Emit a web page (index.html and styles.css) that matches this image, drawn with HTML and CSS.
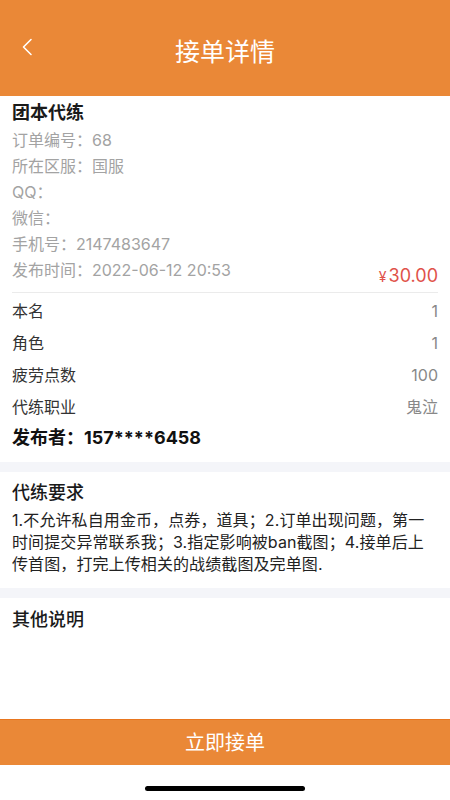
FILE: index.html
```html
<!DOCTYPE html>
<html lang="zh-CN">
<head>
<meta charset="utf-8">
<title>接单详情</title>
<link rel="stylesheet" href="styles.css">
</head>
<body>
<div class="page">
  <header class="topbar">
    <span class="back">
      <svg width="12" height="18" viewBox="0 0 12 18"><path d="M10 1.5 L2.5 9 L10 16.5" fill="none" stroke="#fff" stroke-width="1.6" stroke-linecap="round" stroke-linejoin="round"/></svg>
    </span>
    <h1 class="title">接单详情</h1>
  </header>

  <section class="card first">
    <div class="card-title bold">团本代练</div>
    <div class="meta">订单编号：68</div>
    <div class="meta">所在区服：国服</div>
    <div class="meta">QQ：</div>
    <div class="meta">微信：</div>
    <div class="meta">手机号：2147483647</div>
    <div class="meta-row">
      <span class="meta">发布时间：2022-06-12 20:53</span>
      <span class="price"><span class="yen">¥</span>30.00</span>
    </div>
    <div class="divider"></div>
    <div class="kv"><span class="k">本名</span><span class="v">1</span></div>
    <div class="kv"><span class="k">角色</span><span class="v">1</span></div>
    <div class="kv"><span class="k">疲劳点数</span><span class="v">100</span></div>
    <div class="kv"><span class="k">代练职业</span><span class="v">鬼泣</span></div>
    <div class="publisher">发布者：157****6458</div>
  </section>

  <section class="card second">
    <div class="card-title">代练要求</div>
    <p class="desc">1.不允许私自用金币，点券，道具；2.订单出现问题，第一时间提交异常联系我；3.指定影响被ban截图；4.接单后上传首图，打完上传相关的战绩截图及完单图.</p>
  </section>

  <section class="card third">
    <div class="card-title">其他说明</div>
  </section>

  <button class="accept">立即接单</button>
  <div class="home-area"><span class="home-bar"></span></div>
</div>
</body>
</html>
```

FILE: styles.css
```css
* { box-sizing: border-box; }
html, body {
  margin: 0;
  padding: 0;
  background: #fff;
}
body {
  font-family: Inter, "Noto Sans CJK SC", sans-serif;
  color: #222;
}
.page {
  width: 450px;
  height: 800px;
  display: flex;
  flex-direction: column;
  background: #f4f5f9;
  overflow: hidden;
}
.topbar {
  height: 96px;
  flex: none;
  background: #ea8837;
  display: flex;
  align-items: center;
  justify-content: center;
  position: relative;
  padding-top: 4px;
}
.back {
  position: absolute;
  left: 21px;
  top: 38px;
  width: 12px;
  height: 18px;
  display: flex;
}
.title {
  margin: 0;
  font-family: "Noto Sans CJK SC", sans-serif;
  font-size: 25px;
  font-weight: 400;
  color: #fff;
  line-height: 30px;
}
.card {
  background: #fff;
  padding: 0 12px;
}
.first {
  padding-top: 6px;
  padding-bottom: 9px;
  margin-bottom: 10px;
}
.card-title {
  font-size: 18px;
  line-height: 24px;
  font-weight: 500;
  color: #1a1a1a;
}
.card-title.bold {
  font-weight: 700;
  line-height: 22px;
  margin-bottom: 3px;
}
.meta {
  font-size: 16px;
  line-height: 26px;
  color: #a3a3a3;
  display: block;
}
.meta-row {
  display: flex;
  justify-content: space-between;
  align-items: flex-start;
  height: 26px;
}
.price {
  color: #e0524a;
  font-size: 18px;
  line-height: 16px;
  padding-top: 11px;
}
.yen {
  font-size: 14px;
  margin-right: 2px;
}
.divider {
  height: 1px;
  background: #ebebeb;
  margin: 9px 0 2px;
}
.kv {
  display: flex;
  justify-content: space-between;
  font-size: 16px;
  line-height: 32px;
}
.k { color: #333; }
.v { color: #888; }
.publisher {
  font-size: 18px;
  font-weight: 700;
  line-height: 30px;
  color: #111;
}
.second {
  padding-top: 9px;
  padding-bottom: 13px;
  margin-bottom: 10px;
}
.desc {
  margin: 4px 0 0;
  padding-right: 6px;
  font-size: 16px;
  line-height: 22px;
  letter-spacing: 0.1px;
  color: #222;
}
.third {
  padding-top: 10px;
  flex: 1;
}
.accept {
  flex: none;
  height: 46px;
  border: none;
  border-top: 1px solid #e8761f;
  background: #ea8837;
  color: #fff;
  font-family: "Noto Sans CJK SC", sans-serif;
  font-size: 20px;
  line-height: 44px;
  padding: 0 0 2px;
  margin: 0;
  width: 100%;
}
.home-area {
  height: 35px;
  flex: none;
  background: #fff;
  display: flex;
  justify-content: center;
  padding-top: 21px;
}
.home-bar {
  width: 160px;
  height: 5px;
  border-radius: 3px;
  background: #000;
}
```
